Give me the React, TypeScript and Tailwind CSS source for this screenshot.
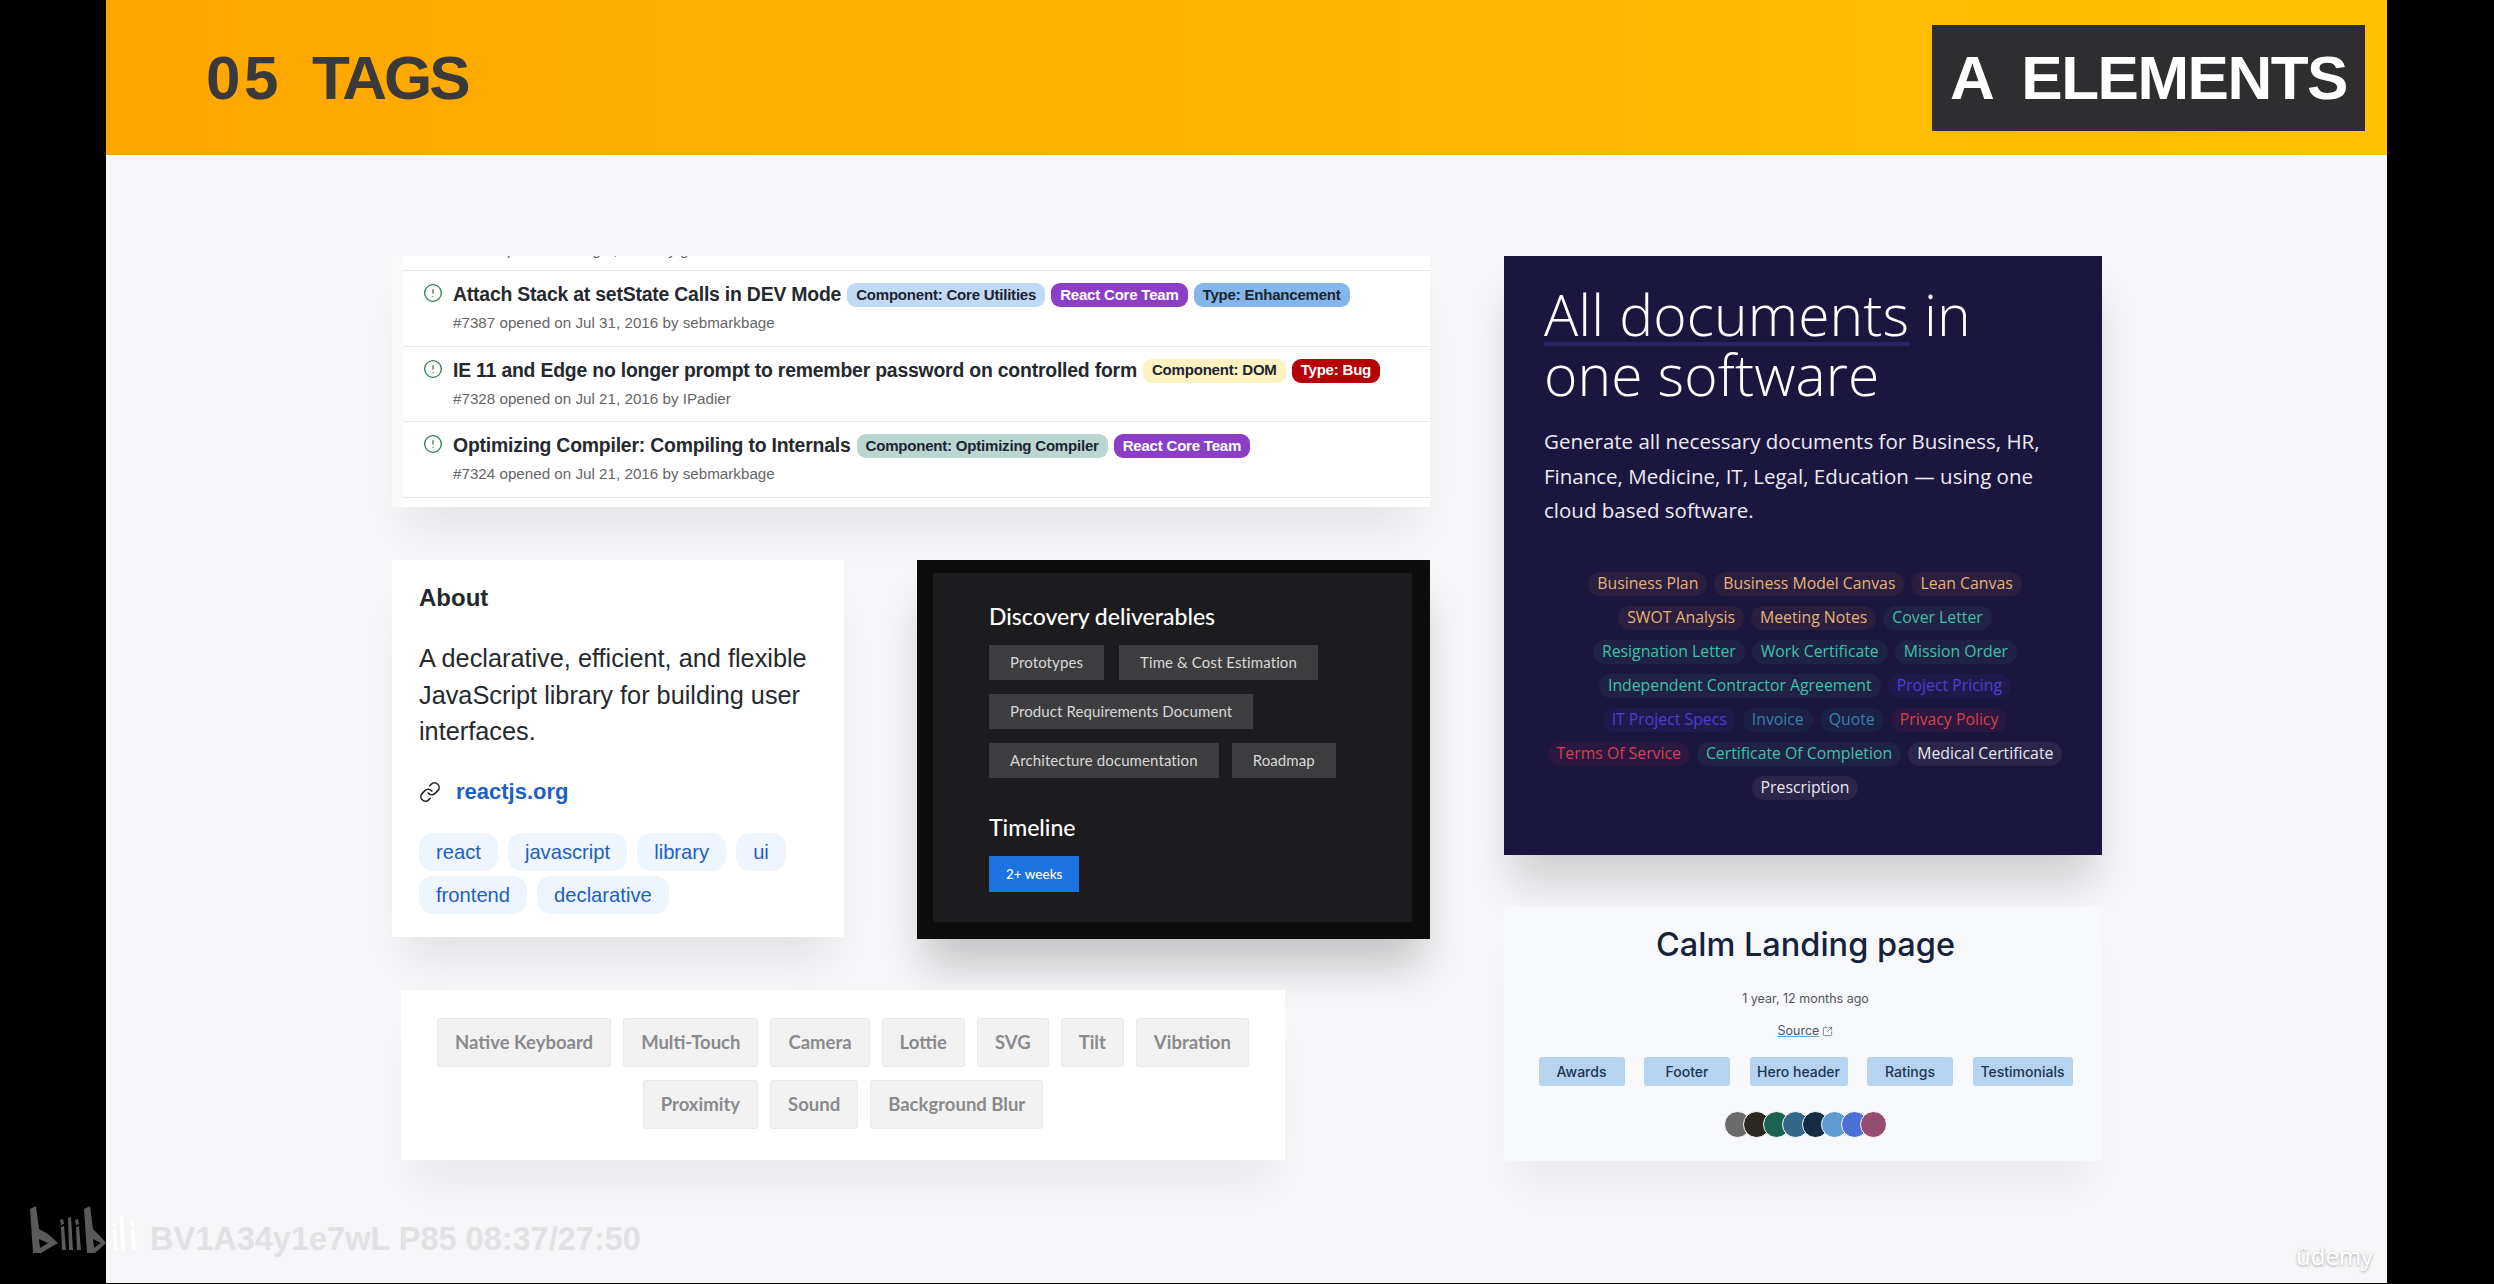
import { CircleAlert, Link as LinkIcon, SquareArrowOutUpRight } from "lucide-react";

const issues = [
  {
    title: "Attach Stack at setState Calls in DEV Mode",
    meta: "#7387 opened on Jul 31, 2016 by sebmarkbage",
    labels: [
      { name: "Component: Core Utilities", cls: "bg-[#c0d9f5] text-[#1b2430]" },
      { name: "React Core Team", cls: "bg-[#8a3fc6] text-white" },
      { name: "Type: Enhancement", cls: "bg-[#84b6eb] text-[#1b2430]" },
    ],
  },
  {
    title: "IE 11 and Edge no longer prompt to remember password on controlled form",
    meta: "#7328 opened on Jul 21, 2016 by IPadier",
    labels: [
      { name: "Component: DOM", cls: "bg-[#fdf2c0] text-[#1b2430]" },
      { name: "Type: Bug", cls: "bg-[#b60205] text-white" },
    ],
  },
  {
    title: "Optimizing Compiler: Compiling to Internals",
    meta: "#7324 opened on Jul 21, 2016 by sebmarkbage",
    labels: [
      { name: "Component: Optimizing Compiler", cls: "bg-[#bad6d1] text-[#1b2430]" },
      { name: "React Core Team", cls: "bg-[#8a3fc6] text-white" },
    ],
  },
];

const topics = ["react", "javascript", "library", "ui", "frontend", "declarative"];

const orange = "text-[#e6b27c] bg-[#2a1f3f]";
const teal = "text-[#3fc2a8] bg-[#1f2145]";
const purple = "text-[#4b3fd0] bg-[#201a4c]";
const blue = "text-[#3c80a6] bg-[#1b2045]";
const red = "text-[#d5404f] bg-[#2a1840]";
const white = "text-[#e9e7f2] bg-[#2a2549]";

const docRows = [
  [["Business Plan", orange], ["Business Model Canvas", orange], ["Lean Canvas", orange]],
  [["SWOT Analysis", orange], ["Meeting Notes", orange], ["Cover Letter", teal]],
  [["Resignation Letter", teal], ["Work Certificate", teal], ["Mission Order", teal]],
  [["Independent Contractor Agreement", teal], ["Project Pricing", purple]],
  [["IT Project Specs", purple], ["Invoice", blue], ["Quote", blue], ["Privacy Policy", red]],
  [["Terms Of Service", red], ["Certificate Of Completion", teal], ["Medical Certificate", white]],
  [["Prescription", white]],
];

const features = [
  ["Native Keyboard", "Multi-Touch", "Camera", "Lottie", "SVG", "Tilt", "Vibration"],
  ["Proximity", "Sound", "Background Blur"],
];

const calmTags = [
  ["Awards", "w-[86px]"],
  ["Footer", "w-[86px]"],
  ["Hero header", "w-[98px]"],
  ["Ratings", "w-[86px]"],
  ["Testimonials", "w-[100px]"],
];

const swatches = [
  "bg-[#6b6b6b]",
  "bg-[#2a2820]",
  "bg-[#1a6350]",
  "bg-[#33688a]",
  "bg-[#142c44]",
  "bg-[#5f9ad0]",
  "bg-[#4c70d8]",
  "bg-[#964c70]",
];

function DarkTag({ children }: { children: string }) {
  return (
    <span className="flex h-[35px] items-center bg-[#3d3d3f] px-[21px] text-[15px] tracking-[0.1px] text-[#d8d8d8]">
      {children}
    </span>
  );
}

function Issues() {
  return (
    <div className="h-[251px] overflow-hidden border-l-[11px] border-[#f9f9fa] bg-white shadow-[0_35px_40px_-14px_rgba(0,0,0,0.07)] [font-family:'Liberation_Sans',sans-serif]">
      <div className="h-[15px] overflow-hidden border-b border-[#e8e8e8]">
        <p className="-mt-[15px] pl-[49px] text-[15.2px] leading-[18px] text-[#666]">
          #7413 opened on Aug 2, 2016 by gaearon
        </p>
      </div>
      {issues.map((issue) => (
        <div key={issue.meta} className="flex h-[75.5px] gap-[10px] border-b border-[#e8e8e8] pl-[20px] pt-[11px]">
          <CircleAlert size={20} strokeWidth={1.6} className="mt-[1px] shrink-0 text-[#2f7d4f]" />
          <div>
            <div className="flex h-[26px] items-center gap-[6px]">
              <span className="text-[19.4px] font-bold tracking-[-0.2px] text-[#24292e]">{issue.title}</span>
              {issue.labels.map((label) => (
                <span key={label.name} className={`flex h-[24px] items-center rounded-[9px] px-[9px] text-[15px] font-bold tracking-[-0.2px] ${label.cls}`}>
                  {label.name}
                </span>
              ))}
            </div>
            <p className="mt-[6px] text-[15.2px] leading-[18px] text-[#666]">{issue.meta}</p>
          </div>
        </div>
      ))}
    </div>
  );
}

function About() {
  return (
    <div className="h-[377px] w-[452px] bg-white px-[27px] pt-[22px] shadow-[0_35px_40px_-14px_rgba(0,0,0,0.08)] [font-family:'Liberation_Sans',sans-serif]">
      <h3 className="text-[24px] font-bold leading-[32px] text-[#24292e]">About</h3>
      <p className="mt-[26px] text-[25.3px] leading-[36.7px] text-[#24292e]">
        A declarative, efficient, and flexible JavaScript library for building user interfaces.
      </p>
      <div className="mt-[25px] flex items-center gap-[15px] text-[#24292e]">
        <LinkIcon size={22} strokeWidth={1.8} />
        <span className="text-[22px] font-bold text-[#1f5fbf]">reactjs.org</span>
      </div>
      <div className="mt-[25px] flex flex-wrap gap-x-[10px] gap-y-[5px]">
        {topics.map((topic) => (
          <span key={topic} className="flex h-[38px] items-center rounded-[14px] bg-[#eef5fd] px-[17px] text-[20.2px] font-medium text-[#1f5fbf]">
            {topic}
          </span>
        ))}
      </div>
    </div>
  );
}

function Discovery() {
  return (
    <div className="h-[379px] w-[513px] border-b-[17px] border-l-[16px] border-r-[18px] border-t-[13px] border-[#0d0d0e] bg-[#1c1c1e] pl-[56px] pt-[27px] shadow-[0_35px_40px_-8px_rgba(0,0,0,0.2)] [font-family:'Lato',sans-serif]">
      <h3 className="text-[23px] font-medium leading-[32px] text-white">Discovery deliverables</h3>
      <div className="mt-[13px] flex flex-col gap-[14px]">
        <div className="flex gap-[15px]">
          <DarkTag>Prototypes</DarkTag>
          <DarkTag>Time & Cost Estimation</DarkTag>
        </div>
        <div className="flex">
          <DarkTag>Product Requirements Document</DarkTag>
        </div>
        <div className="flex gap-[13px]">
          <DarkTag>Architecture documentation</DarkTag>
          <DarkTag>Roadmap</DarkTag>
        </div>
      </div>
      <h3 className="mt-[33px] text-[23px] font-medium leading-[32px] text-white">Timeline</h3>
      <span className="mt-[13px] inline-flex h-[36px] items-center bg-[#1a73e0] px-[17px] text-[13.5px] font-medium text-white">
        2+ weeks
      </span>
    </div>
  );
}

function Features() {
  return (
    <div className="ml-[9px] flex h-[170px] w-[884px] flex-col items-center gap-[13px] bg-white pt-[28px] shadow-[0_35px_40px_-14px_rgba(0,0,0,0.06)] [font-family:'Lato',sans-serif]">
      {features.map((row) => (
        <div key={row[0]} className="flex gap-[12px]">
          {row.map((tag) => (
            <span key={tag} className="flex h-[49px] items-center rounded-[3px] border border-[#e9e9ea] bg-[#f2f2f3] px-[17px] text-[18.5px] font-bold text-[#8a8a8c]">
              {tag}
            </span>
          ))}
        </div>
      ))}
    </div>
  );
}

function DocCard() {
  return (
    <div className="h-[599px] bg-[#1b163d] px-[40px] pt-[28px] shadow-[0_35px_40px_-8px_rgba(0,0,0,0.16)] [font-family:'Open_Sans',sans-serif]">
      <h2 className="whitespace-nowrap text-[57px] font-light leading-[60px] tracking-[0.1px] text-white">
        <span className="underline decoration-[#2a2560] decoration-[4px] underline-offset-[6px]">All documents</span> in
        <br />
        one software
      </h2>
      <p className="mt-[20px] w-[518px] text-[20.5px] leading-[34.5px] text-[#eceaf4]">
        Generate all necessary documents for Business, HR, Finance, Medicine, IT, Legal, Education — using one cloud based software.
      </p>
      <div className="ml-[4px] mt-[44px] flex flex-col items-center gap-[10px]">
        {docRows.map((row) => (
          <div key={row[0][0]} className="flex gap-[7px]">
            {row.map(([name, cls]) => (
              <span key={name} className={`flex h-[24px] items-center whitespace-nowrap rounded-full px-[9px] text-[15.8px] ${cls}`}>
                {name}
              </span>
            ))}
          </div>
        ))}
      </div>
    </div>
  );
}

function CalmCard() {
  return (
    <div className="flex h-[254px] flex-col items-center bg-[#f6f8fc] pl-[5px] pt-[17px] shadow-[0_35px_40px_-14px_rgba(0,0,0,0.05)] [font-family:'Inter',sans-serif]">
      <h3 className="text-[32.5px] font-medium leading-[42px] text-[#16223a]">Calm Landing page</h3>
      <p className="mt-[25px] text-[12.5px] leading-[16px] text-[#555]">1 year, 12 months ago</p>
      <p className="mt-[15px] flex items-center gap-[3px] text-[12.5px] leading-[18px] text-[#556]">
        <span className="underline decoration-[#5fa8dc]">Source</span>
        <SquareArrowOutUpRight size={11} strokeWidth={1.5} />
      </p>
      <div className="mt-[17px] flex gap-[19.5px]">
        {calmTags.map(([name, width]) => (
          <span key={name} className={`flex h-[29px] items-center justify-center rounded-[3px] bg-[#b6d3f0] text-[14px] font-medium text-[#1c3350] ${width}`}>
            {name}
          </span>
        ))}
      </div>
      <div className="mt-[25px] flex pl-[7px]">
        {swatches.map((color) => (
          <span key={color} className={`-ml-[7.5px] size-[27px] rounded-full border border-white ${color}`} />
        ))}
      </div>
    </div>
  );
}

function BiliLogo() {
  return (
    <svg width="108" height="48" viewBox="0 0 108 48" className="absolute left-[30px] top-[1206px]">
      <g fill="#5a5a5a">
        <path fillRule="evenodd" d="M0 3 L6 0 L9 23 L18 28 L28 37 L11 47 L3 47 Z M9 33 L10 42 L18 37 Z" />
        <path d="M30 14 L33 13 L34 18 L31 19 Z M31 21 L34 20 L36 44 L32 44 Z" />
        <path d="M38 12 L41 11 L43 44 L39 44 Z" />
        <path d="M45 14 L48 13 L49 18 L46 19 Z M46 21 L49 20 L51 44 L47 44 Z" />
        <path fillRule="evenodd" d="M54 3 L60 0 L63 23 L70 30 L76 37 L65 47 L57 47 Z M63 33 L64 42 L71 37 Z" />
      </g>
      <g fill="#ffffff">
        <path d="M82 18 L85 17 L86 21 L83 22 Z M83 24 L86 23 L87 44 L84 44 Z" />
        <path d="M90 10 L93 9 L95 45 L91 45 Z" />
        <path d="M100 16 L103 15 L104 20 L101 21 Z M101 23 L104 22 L106 44 L102 44 Z" />
      </g>
    </svg>
  );
}

export default function App() {
  return (
    <div className="h-screen overflow-hidden bg-black">
      <div className="ml-[106px] flex h-[1283px] w-[2281px] flex-col bg-[#f6f6f8]">
        <header className="flex h-[155px] items-center justify-between bg-gradient-to-r from-[#ffa600] to-[#ffc200] pl-[100px] pr-[22px] [font-family:'Liberation_Sans',sans-serif]">
          <h1 className="flex gap-[30px] text-[62px] font-bold text-[#3a3a3c]">
            <span className="tracking-[3.5px]">05</span>
            <span className="tracking-[-3px]">TAGS</span>
          </h1>
          <div className="flex h-[106px] w-[433px] items-center justify-center gap-[28px] bg-[#2e2e30] text-[62px] font-bold tracking-[-1.5px] text-white">
            <span>A</span>
            <span>ELEMENTS</span>
          </div>
        </header>
        <main className="flex gap-[74px] pl-[286px] pt-[101px]">
          <div className="flex w-[1038px] flex-col">
            <Issues />
            <div className="mt-[53px] flex gap-[73px]">
              <About />
              <Discovery />
            </div>
            <div className="mt-[51px]">
              <Features />
            </div>
          </div>
          <div className="flex w-[598px] flex-col gap-[52px]">
            <DocCard />
            <CalmCard />
          </div>
        </main>
      </div>
      <BiliLogo />
      <p className="absolute left-[150px] top-[1215px] text-[32.5px] font-bold text-[#e2e2e4] [font-family:'Liberation_Sans',sans-serif]">
        BV1A34y1e7wL P85 08:37/27:50
      </p>
      <p className="absolute left-[2296px] top-[1238px] text-[24px] font-medium text-white [text-shadow:0_1px_3px_rgba(0,0,0,0.35)] [font-family:'Open_Sans',sans-serif]">
        ûdemy
      </p>
    </div>
  );
}
